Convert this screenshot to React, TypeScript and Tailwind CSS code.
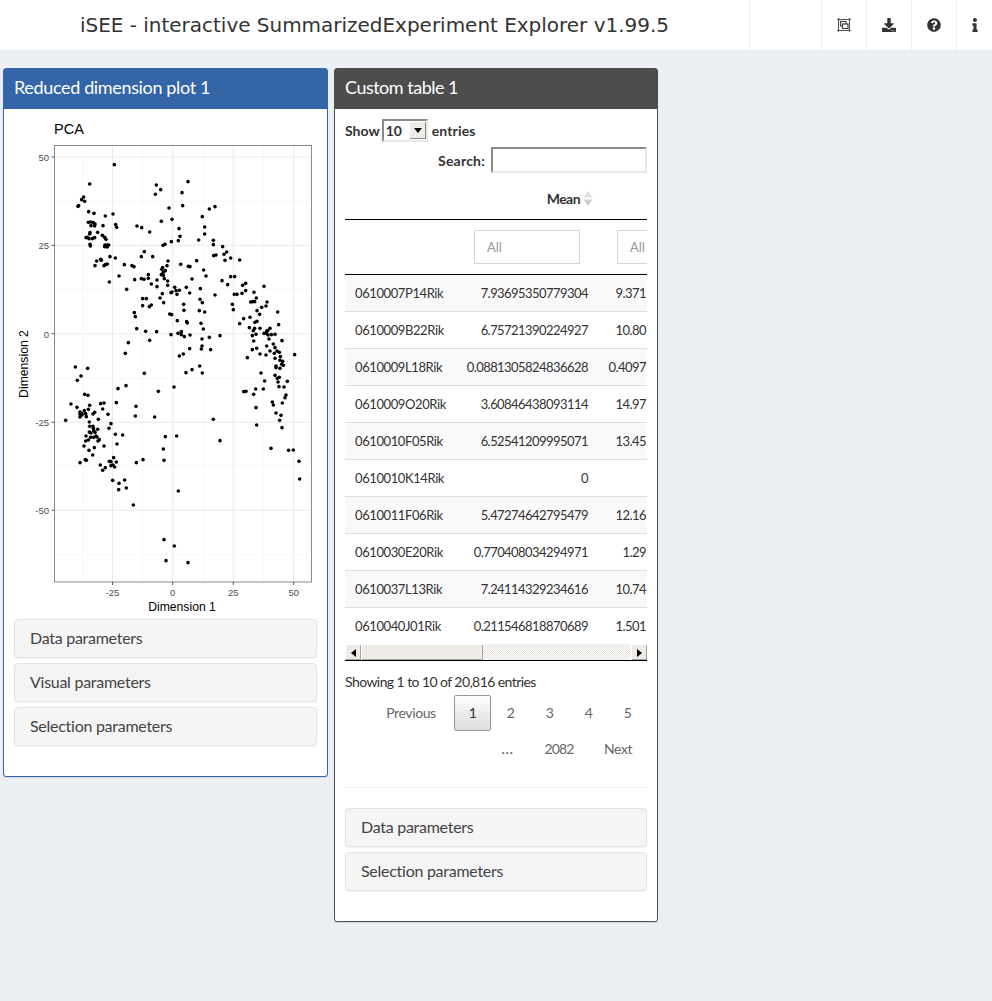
import React from "react";
import { FaDownload, FaQuestionCircle, FaInfo } from "react-icons/fa";

const T: [number, number][] = [[343,494],[269,552],[251,591],[245,599],[254,604],[236,617],[234,619],[266,635],[282,640],[316,648],[339,642],[347,674],[350,682],[265,667],[272,666],[280,668],[285,672],[273,677],[284,678],[309,677],[293,697],[270,698],[269,702],[307,706],[314,712],[318,718],[258,713],[262,712],[267,716],[277,716],[284,713],[315,735],[322,735],[326,735],[314,740],[322,741],[270,733],[271,738],[330,770],[346,774],[290,783],[302,778],[304,781],[285,797],[312,797],[322,792],[316,794],[328,846],[357,828],[373,794],[396,797],[402,800],[404,839],[380,868],[424,770],[433,755],[458,770],[411,678],[425,683],[449,696],[424,836],[432,838],[445,824],[445,835],[454,852],[471,860],[471,840],[428,896],[439,896],[466,583],[469,555],[482,569],[546,578],[564,545],[548,617],[507,624],[484,664],[516,658],[537,686],[540,709],[535,722],[514,725],[489,736],[495,733],[504,783],[501,797],[488,803],[485,808],[496,812],[490,817],[484,824],[490,826],[493,836],[503,843],[503,856],[542,793],[565,799],[570,800],[576,837],[590,782],[611,810],[618,828],[607,650],[614,681],[614,702],[596,720],[628,627],[645,620],[640,721],[640,734],[668,740],[680,756],[672,763],[641,767],[648,765],[692,774],[675,781],[719,780],[666,842],[683,854],[692,830],[704,830],[728,856],[737,850],[737,872],[726,880],[762,877],[792,859],[769,894],[703,883],[711,883],[645,885],[601,866],[569,879],[559,862],[538,871],[524,862],[513,878],[516,876],[528,872],[531,883],[487,881],[480,894],[600,898]];
const B: [number, number][] = [[491,8],[551,13],[552,31],[428,17],[448,20],[454,15],[403,38],[406,50],[410,86],[437,94],[470,95],[509,42],[515,44],[532,62],[560,65],[562,69],[598,32],[614,36],[607,8],[603,70],[610,87],[534,100],[544,95],[544,104],[553,110],[570,105],[513,104],[628,112],[660,107],[606,117],[606,138],[604,147],[569,146],[632,149],[550,162],[538,168],[449,121],[385,128],[376,160],[433,220],[558,218],[576,209],[599,198],[607,219],[522,261],[475,274],[354,266],[378,257],[226,201],[263,205],[243,228],[232,241],[254,283],[264,286],[213,312],[231,322],[269,316],[265,328],[253,332],[240,336],[240,343],[246,341],[257,341],[240,351],[259,350],[246,345],[284,337],[279,342],[302,311],[312,309],[308,327],[349,308],[408,319],[406,348],[324,343],[295,358],[268,366],[269,379],[279,379],[280,385],[281,392],[293,388],[268,396],[273,399],[285,397],[333,371],[327,385],[197,361],[464,351],[640,358],[258,408],[272,412],[281,412],[288,408],[291,411],[265,420],[257,423],[294,423],[298,419],[346,403],[368,405],[496,410],[530,408],[660,422],[252,438],[283,443],[312,438],[351,432],[267,451],[490,447],[278,465],[256,479],[259,481],[240,488],[341,473],[328,484],[333,485],[349,486],[409,488],[429,479],[492,481],[301,495],[333,497],[339,495],[344,501],[316,503],[308,511],[338,541],[374,540],[357,550],[379,564],[356,569],[535,573],[400,615],[492,719],[523,738],[498,782],[564,788],[697,13],[700,29],[719,71],[731,56],[750,52],[771,32],[779,43],[785,22],[798,18],[801,6],[752,6],[758,5],[764,5],[833,36],[836,74],[765,67],[771,64],[748,83],[764,85],[760,92],[768,103],[780,85],[757,107],[792,100],[800,93],[803,92],[810,85],[799,100],[804,105],[814,104],[825,103],[807,117],[761,123],[846,122],[820,132],[825,143],[800,138],[810,153],[770,145],[757,149],[780,162],[798,165],[823,160],[831,153],[838,157],[825,175],[841,170],[840,181],[848,184],[742,173],[884,164],[828,198],[828,203],[840,205],[845,193],[850,196],[783,219],[825,226],[832,235],[838,232],[794,243],[834,246],[862,244],[837,260],[852,261],[767,267],[790,267],[731,275],[738,274],[761,283],[858,285],[855,293],[817,306],[820,315],[847,309],[768,323],[828,339],[843,346],[839,361],[770,375],[846,383],[813,445],[866,451],[880,450],[897,484],[899,537]];

// plot svg is placed with its origin at page (14, 118)
const OX = 14, OY = 118;
const points = [...T.map(([x, y]) => [x / 3 - OX, y / 3 - OY]), ...B.map(([x, y]) => [x / 3 - OX, 300 + y / 3 - OY])];

function Plot() {
  const L = 54.5 - OX, R = 311.5 - OX, TT = 145.5 - OY, BB = 582 - OY;
  const xMaj: [number, string][] = [[112.5, "-25"], [172.7, "0"], [233.3, "25"], [293.7, "50"]];
  const yMaj: [number, string][] = [[157, "50"], [245.3, "25"], [333.7, "0"], [422.3, "-25"], [510.3, "-50"]];
  const xMin = [82.7, 142.3, 203.3, 263.3];
  const yMin = [201.3, 289.3, 378.3, 466, 555];
  const font = "'Liberation Sans', Arial, sans-serif";
  return (
    <svg width="303" height="501" className="block" fontFamily={font}>
      <text x={54 - OX} y={134 - OY} fontSize="14.5" fill="#000">PCA</text>
      {xMin.map((x) => <line key={x} x1={x - OX} x2={x - OX} y1={TT} y2={BB} stroke="#f3f3f3" strokeWidth="0.7" />)}
      {yMin.map((y) => <line key={y} y1={y - OY} y2={y - OY} x1={L} x2={R} stroke="#f3f3f3" strokeWidth="0.7" />)}
      {xMaj.map(([x]) => <line key={x} x1={x - OX} x2={x - OX} y1={TT} y2={BB} stroke="#ebebeb" strokeWidth="1" />)}
      {yMaj.map(([y]) => <line key={y} y1={y - OY} y2={y - OY} x1={L} x2={R} stroke="#ebebeb" strokeWidth="1" />)}
      {points.map(([x, y], i) => <circle key={i} cx={x} cy={y} r="1.8" fill="#000" />)}
      <rect x={L} y={TT} width={R - L} height={BB - TT} fill="none" stroke="#8a8a8a" strokeWidth="1" />
      {xMaj.map(([x, t]) => (
        <g key={t}>
          <line x1={x - OX} x2={x - OX} y1={BB} y2={BB + 3} stroke="#333" strokeWidth="0.8" />
          <text x={x - OX} y={596 - OY} textAnchor="middle" fontSize="9.5" fill="#4d4d4d">{t}</text>
        </g>
      ))}
      {yMaj.map(([y, t]) => (
        <g key={t}>
          <line x1={L - 3} x2={L} y1={y - OY} y2={y - OY} stroke="#333" strokeWidth="0.8" />
          <text x={49 - OX} y={y - OY + 4} textAnchor="end" fontSize="9.5" fill="#4d4d4d">{t}</text>
        </g>
      ))}
      <text x={182 - OX} y={611 - OY} textAnchor="middle" fontSize="12.2" fill="#000">Dimension 1</text>
      <text transform={`translate(${28 - OX} ${364 - OY}) rotate(-90)`} textAnchor="middle" fontSize="12.2" fill="#000">Dimension 2</text>
    </svg>
  );
}

function Collapse({ label }: { label: string }) {
  return (
    <div className="h-[39px] rounded-[4px] border border-[#e3e3e3] bg-[#f5f5f5] pl-[15px] text-[16px] leading-[35px] tracking-[-0.27px] text-[#444] shadow-[0_1px_1px_rgba(0,0,0,0.05)]">
      {label}
    </div>
  );
}

function Fullscreen() {
  return (
    <svg width="14" height="14" viewBox="0 0 14 14" fill="none" stroke="#444" strokeWidth="1">
      <rect x="1.5" y="1.5" width="11" height="11" strokeWidth="0.9" />
      <circle cx="1.4" cy="1.4" r="1.1" fill="#444" stroke="none" />
      <circle cx="12.6" cy="1.4" r="1.1" fill="#444" stroke="none" />
      <circle cx="1.4" cy="12.6" r="1.1" fill="#444" stroke="none" />
      <circle cx="12.6" cy="12.6" r="1.1" fill="#444" stroke="none" />
      <rect x="3.5" y="3.5" width="5.5" height="4.5" strokeWidth="1.2" />
      <rect x="5.5" y="6" width="5.5" height="4.5" strokeWidth="1.2" fill="#fff" />
    </svg>
  );
}

function NavItem({ children, w }: { children: React.ReactNode; w: string }) {
  return <div className={`flex h-full items-center justify-center border-l border-[#eeeeee] text-[#333] ${w}`}>{children}</div>;
}

const rows: [string, string, string][] = [
  ["0610007P14Rik", "7.93695350779304", "9.371"],
  ["0610009B22Rik", "6.75721390224927", "10.80"],
  ["0610009L18Rik", "0.0881305824836628", "0.4097"],
  ["0610009O20Rik", "3.60846438093114", "14.97"],
  ["0610010F05Rik", "6.52541209995071", "13.45"],
  ["0610010K14Rik", "0", ""],
  ["0610011F06Rik", "5.47274642795479", "12.16"],
  ["0610030E20Rik", "0.770408034294971", "1.29"],
  ["0610037L13Rik", "7.24114329234616", "10.74"],
  ["0610040J01Rik", "0.211546818870689", "1.501"],
];

function Pager({ children, active, cls }: { children: React.ReactNode; active?: boolean; cls?: string }) {
  return (
    <div
      className={`flex h-[36px] items-center justify-center rounded-[2px] pb-[2px] ${active ? "border border-[#979797] bg-gradient-to-b from-white to-[#dcdcdc] text-[#333]" : "text-[#666]"} ${cls ?? ""}`}
    >
      {children}
    </div>
  );
}

function ScrollArrow({ dir }: { dir: "l" | "r" }) {
  return (
    <div className="flex h-[16px] w-[16px] shrink-0 items-center justify-center border-t border-l border-white bg-[#efebe7] shadow-[inset_-1px_-1px_0_#a8a4a0]">
      <svg width="5" height="8" viewBox="0 0 5 8">
        <path d={dir === "l" ? "M5 0L0 4L5 8Z" : "M0 0L5 4L0 8Z"} fill="#000" />
      </svg>
    </div>
  );
}

export default function App() {
  return (
    <div className="min-h-[1001px] bg-[#ecf0f5] font-['Lato','Noto_Sans',sans-serif] text-[14px] text-[#333]">
      <header className="flex h-[51px] items-center border-b border-[#e6e9ee] bg-white">
        <div className="flex-1 pl-[80px] font-['DejaVu_Sans',sans-serif] text-[20px] tracking-[-0.02px] text-[#333]">
          iSEE - interactive SummarizedExperiment Explorer v1.99.5
        </div>
        <NavItem w="w-[72px]"><span /></NavItem>
        <NavItem w="w-[45px]"><Fullscreen /></NavItem>
        <NavItem w="w-[45px]"><FaDownload size={14} /></NavItem>
        <NavItem w="w-[45px]"><FaQuestionCircle size={14} /></NavItem>
        <NavItem w="w-[36px]"><FaInfo size={14} /></NavItem>
      </header>

      <main className="flex items-start gap-[6px] pl-[3px] pt-[17px]">
        <section className="w-[325px] rounded-[3px] border border-[#3465a8] bg-white shadow-[0_1px_1px_rgba(0,0,0,0.1)]">
          <h3 className="flex h-[40px] items-center bg-[#3465a8] pb-[3px] pl-[10px] text-[18px] tracking-[-0.35px] text-white">Reduced dimension plot 1</h3>
          <div className="px-[10px] pb-[30px] pt-[9px]">
            <Plot />
            <div className="flex flex-col gap-[5px]">
              <Collapse label="Data parameters" />
              <Collapse label="Visual parameters" />
              <Collapse label="Selection parameters" />
            </div>
          </div>
        </section>

        <section className="w-[324px] rounded-[3px] border border-[#4d4d4d] bg-white shadow-[0_1px_1px_rgba(0,0,0,0.1)]">
          <h3 className="flex h-[40px] items-center bg-[#4d4d4d] pb-[3px] pl-[10px] text-[18px] tracking-[-0.5px] text-white">Custom table 1</h3>
          <div className="px-[10px] pb-[30px] pt-[9px]">
            <div className="w-[302px]">
              <div className="flex h-[24px] items-center font-bold text-[#333]">
                <span>Show</span>
                <div className="ml-[2px] mr-[4px] flex h-[23px] w-[46px] items-center border-2 border-t-[#8a8a8a] border-l-[#8a8a8a] border-r-[#e8e8e8] border-b-[#e8e8e8] pl-[2px]">
                  <span className="flex-1">10</span>
                  <div className="flex h-[17px] w-[16px] items-center justify-center bg-[#efebe7] shadow-[inset_-1px_-1px_0_#8a8a8a]">
                    <svg width="8" height="5" viewBox="0 0 8 5"><path d="M0 0H8L4 5Z" fill="#000" /></svg>
                  </div>
                </div>
                <span className="tracking-[0.15px]">entries</span>
              </div>
              <div className="mt-[4px] flex h-[28px] items-center justify-end font-bold">
                <span className="mr-[6px] tracking-[0.2px]">Search:</span>
                <div className="h-[26px] w-[156px] border-2 border-t-[#8a8a8a] border-l-[#8a8a8a] border-r-[#e8e8e8] border-b-[#e8e8e8]" />
              </div>

              <div className="mt-[11px] overflow-hidden">
                <table className="w-[302px] table-fixed border-separate border-spacing-0 text-[13px] tracking-[-0.55px]">
                  <colgroup>
                    <col className="w-[111px]" />
                    <col className="w-[142px]" />
                    <col className="w-[49px]" />
                  </colgroup>
                  <thead>
                    <tr className="h-[35px]">
                      <th className="border-b border-black" />
                      <th className="border-b border-black pb-[7px] pr-[5px] text-right text-[14px] font-bold">
                        <span className="inline-flex items-center gap-[3px] tracking-[-0.55px]">
                          Mean
                          <svg width="10" height="15" viewBox="0 0 10 15"><path d="M5 0L9.5 6.5H0.5Z" fill="#e0e0e0" /><path d="M5 15L9.5 8.5H0.5Z" fill="#cfcfcf" /></svg>
                        </span>
                      </th>
                      <th className="border-b border-black" />
                    </tr>
                    <tr className="h-[55px]">
                      <th className="border-b border-black" />
                      <th className="border-b border-black align-middle">
                        <div className="mx-auto flex h-[34px] w-[106px] items-center border border-[#d2d6de] pl-[12px] pt-[1px] text-[13px] font-normal tracking-normal text-[#999]">All</div>
                      </th>
                      <th className="border-b border-black pl-[19px] align-middle">
                        <div className="flex h-[34px] w-[106px] items-center border border-[#d2d6de] pl-[12px] pt-[1px] text-[13px] font-normal tracking-normal text-[#999]">All</div>
                      </th>
                    </tr>
                  </thead>
                  <tbody>
                    {rows.map((r, i) => {
                      const line = i < 9 ? "border-b border-[#ddd]" : "";
                      return (
                        <tr key={r[0]} className={`${i < 9 ? "h-[37px]" : "h-[36px]"} ${i % 2 === 0 ? "bg-[#f9f9f9]" : "bg-white"}`}>
                          <td className={`whitespace-nowrap pl-[10px] pt-[2px] tracking-[-0.4px] ${line}`}>{r[0]}</td>
                          <td className={`whitespace-nowrap pr-[10px] pt-[2px] text-right ${line}`}>{r[1]}</td>
                          <td className={`whitespace-nowrap pr-[1px] pt-[2px] text-right ${line}`}>{r[2]}</td>
                        </tr>
                      );
                    })}
                  </tbody>
                </table>
              </div>

              <div className="flex h-[17px] items-start border-b border-black bg-[repeating-conic-gradient(#e6e3df_0_25%,#fff_0_50%)] bg-[length:2px_2px]">
                <ScrollArrow dir="l" />
                <div className="h-[16px] w-[122px] border-t border-l border-white bg-[#efebe7] shadow-[inset_-1px_-1px_0_#a8a4a0]" />
                <div className="flex-1" />
                <ScrollArrow dir="r" />
              </div>

              <div className="mt-[11px] h-[20px] leading-[20px] tracking-[-0.57px]">Showing 1 to 10 of 20,816 entries</div>

              <div className="mt-[3px] flex h-[36px] items-center justify-end tracking-[-0.4px]">
                <Pager cls="w-[68px] mr-[9px]">Previous</Pager>
                <Pager active cls="w-[37px]">1</Pager>
                <Pager cls="w-[39px]">2</Pager>
                <Pager cls="w-[39px]">3</Pager>
                <Pager cls="w-[39px]">4</Pager>
                <Pager cls="w-[39px]">5</Pager>
              </div>
              <div className="flex h-[36px] items-center justify-end tracking-[-0.4px]">
                <Pager cls="w-[40px] pr-[4px] text-[16px]">…</Pager>
                <Pager cls="w-[60px] tracking-[-0.9px]">2082</Pager>
                <Pager cls="w-[58px]">Next</Pager>
              </div>

              <div className="mt-[20px] flex flex-col gap-[5px] border-t border-[#eeeeee] pt-[20px]">
                <Collapse label="Data parameters" />
                <Collapse label="Selection parameters" />
              </div>
            </div>
          </div>
        </section>
      </main>
    </div>
  );
}
